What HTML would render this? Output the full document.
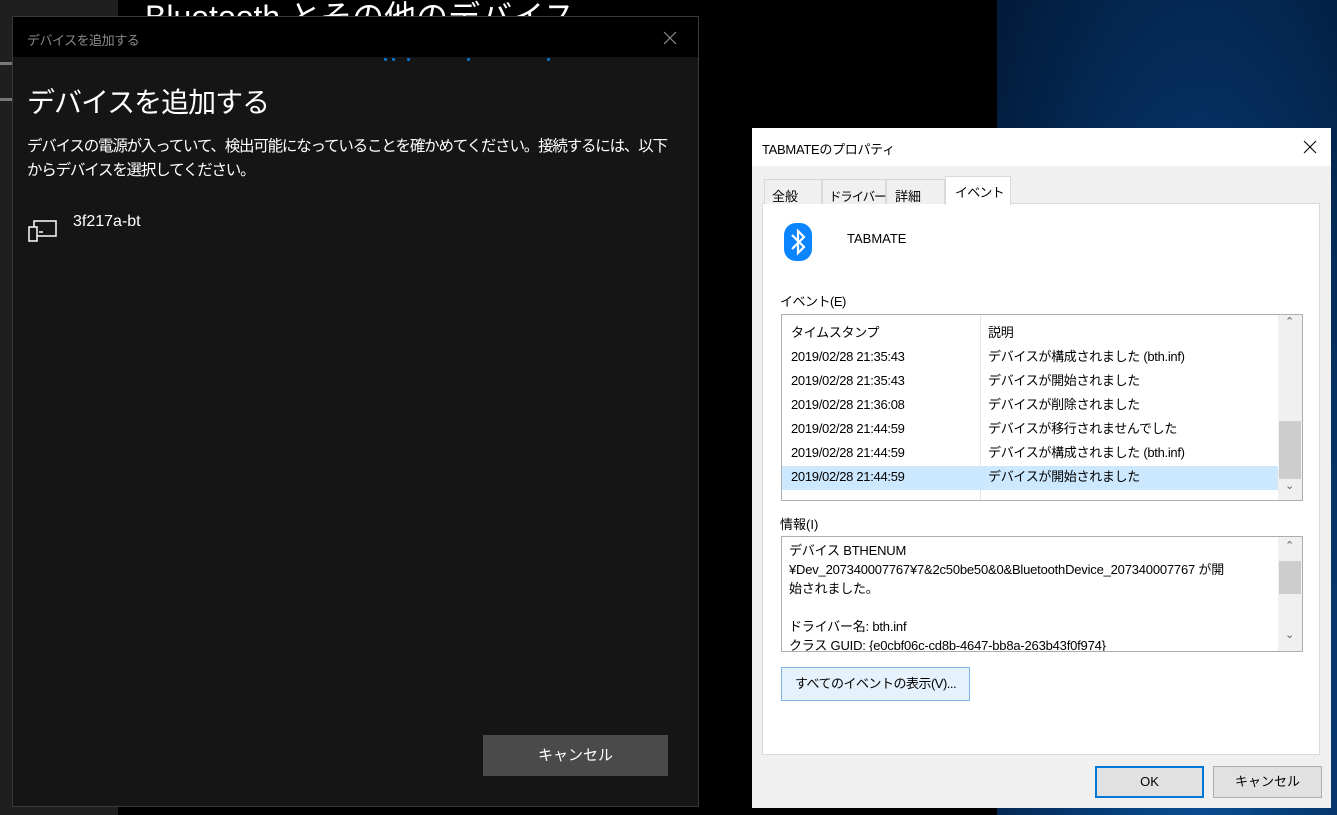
<!DOCTYPE html>
<html><head><meta charset="utf-8"><style>
*{margin:0;padding:0;box-sizing:border-box}
body{width:1337px;height:815px;overflow:hidden;background:#000;position:relative;font-family:"Liberation Sans","Noto Sans CJK JP",sans-serif}
.a{position:absolute}
.t{white-space:nowrap}
</style></head><body>
<div class="a" style="left:0;top:0;width:118px;height:815px;background:#1f1f1f"></div>
<div class="a" style="left:997px;top:0;width:340px;height:815px;background:radial-gradient(ellipse at 60% 90%,#0a4f95 0%,#063a72 40%,#04234a 80%,#031a38 100%)"></div>
<div class="a t" style="left:145px;top:-8px;font-size:32px;color:#fff">Bluetooth とその他のデバイス</div>
<div class="a" style="left:0;top:62px;width:12px;height:3px;background:#777"></div>
<div class="a" style="left:0;top:98px;width:12px;height:3px;background:#777"></div>
<!-- dark dialog -->
<div class="a" style="left:12px;top:16px;width:687px;height:791px;background:#151515;border:1px solid #3a3a3a">
 <div class="a" style="left:0;top:0;width:685px;height:40px;background:#000"></div>
 <div class="a t" style="left:14px;top:13px;font-size:13px;color:#8a8a8a;letter-spacing:-0.5px">デバイスを追加する</div>
 <svg class="a" style="left:650px;top:14px" width="14" height="14" viewBox="0 0 14 14" stroke="#8a8a8a" stroke-width="1.2"><line x1="1" y1="1" x2="13" y2="13"/><line x1="13" y1="1" x2="1" y2="13"/></svg>
 <div class="a" style="left:371px;top:41px;width:3px;height:3px;border-radius:50%;background:#0a78d7"></div>
 <div class="a" style="left:379px;top:41px;width:3px;height:3px;border-radius:50%;background:#0a78d7"></div>
 <div class="a" style="left:394px;top:41px;width:3px;height:3px;border-radius:50%;background:#0a78d7"></div>
 <div class="a" style="left:454px;top:41px;width:3px;height:3px;border-radius:50%;background:#0a78d7"></div>
 <div class="a" style="left:534px;top:41px;width:3px;height:3px;border-radius:50%;background:#0a78d7"></div>
 <div class="a t" style="left:14px;top:64px;font-size:28px;color:#fff;letter-spacing:-1px">デバイスを追加する</div>
 <div class="a t" style="left:14px;top:118px;font-size:15.5px;line-height:24px;color:#fff;letter-spacing:-1.2px">デバイスの電源が入っていて、検出可能になっていることを確かめてください。接続するには、以下<br>からデバイスを選択してください。</div>
 <svg class="a" style="left:14px;top:201px" width="32" height="26" viewBox="0 0 32 26" fill="none" stroke="#fff" stroke-width="1.5"><rect x="7" y="3" width="22" height="15"/><rect x="2" y="9" width="8" height="14" fill="#151515"/><line x1="12" y1="14" x2="16" y2="14"/></svg>
 <div class="a t" style="left:60px;top:196px;font-size:16px;color:#fff">3f217a-bt</div>
 <div class="a" style="left:470px;top:718px;width:185px;height:41px;background:#4a4a4a;color:#fff;font-size:15px;text-align:center;line-height:41px">キャンセル</div>
</div>
<!-- properties dialog -->
<div class="a" style="left:752px;top:128px;width:579px;height:680px;background:#f0f0f0;font-size:13px;color:#000">
 <div class="a" style="left:0;top:0;width:579px;height:38px;background:#fff"></div>
 <div class="a t" style="left:10px;top:11px;font-size:13px;letter-spacing:-0.3px">TABMATEのプロパティ</div>
 <svg class="a" style="left:551px;top:12px" width="14" height="14" viewBox="0 0 14 14" stroke="#000" stroke-width="1.1"><line x1="1" y1="1" x2="13" y2="13"/><line x1="13" y1="1" x2="1" y2="13"/></svg>
 <div class="a" style="left:10px;top:75px;width:558px;height:552px;background:#fff;border:1px solid #dadada"></div>
 <div class="a t" style="left:12px;top:51px;width:58px;height:25px;border:1px solid #d9d9d9;border-bottom:none;background:#f0f0f0;padding:6px 0 0 7px">全般</div>
 <div class="a t" style="left:70px;top:51px;width:64px;height:25px;border:1px solid #d9d9d9;border-bottom:none;background:#f0f0f0;padding:6px 0 0 6px;font-size:12.5px;letter-spacing:-1.2px">ドライバー</div>
 <div class="a t" style="left:134px;top:51px;width:59px;height:25px;border:1px solid #d9d9d9;border-bottom:none;background:#f0f0f0;padding:6px 0 0 8px">詳細</div>
 <div class="a t" style="left:193px;top:48px;width:66px;height:29px;border:1px solid #d9d9d9;border-bottom:none;background:#fff;padding:5px 0 0 9px;letter-spacing:-0.8px">イベント</div>
 <svg class="a" style="left:32px;top:95px" width="28" height="38" viewBox="0 0 28 38"><rect x="0" y="0" width="28" height="38" rx="12" fill="#0a84ff"/><path d="M8 12 L20 24 L14 30 L14 8 L20 14 L8 26" fill="none" stroke="#fff" stroke-width="2.2"/></svg>
 <div class="a t" style="left:95px;top:103px">TABMATE</div>
 <div class="a t" style="left:28px;top:163px;letter-spacing:-0.5px">イベント(E)</div>
 <div class="a" style="left:29px;top:186px;width:522px;height:187px;background:#fff;border:1px solid #adadad;overflow:hidden">
  <div class="a" style="left:198px;top:0;width:1px;height:185px;background:#e5e5e5"></div>
  <div class="a" style="left:0;top:151px;width:496px;height:24px;background:#cce8ff"></div>
  <div class="a" style="left:496px;top:0;width:24px;height:185px;background:#f0f0f0"></div>
  <div class="a" style="left:497px;top:106px;width:22px;height:58px;background:#cdcdcd"></div>
  <div class="a t" style="left:503px;top:0px;font-size:11px;color:#606060">⌃</div>
  <div class="a t" style="left:503px;top:164px;font-size:11px;color:#606060">⌄</div>
  <div class="a t" style="left:9px;top:6px;line-height:24px;letter-spacing:-0.3px">タイムスタンプ<br>2019/02/28 21:35:43<br>2019/02/28 21:35:43<br>2019/02/28 21:36:08<br>2019/02/28 21:44:59<br>2019/02/28 21:44:59<br>2019/02/28 21:44:59</div>
  <div class="a t" style="left:206px;top:6px;line-height:24px;letter-spacing:-0.3px">説明<br>デバイスが構成されました (bth.inf)<br>デバイスが開始されました<br>デバイスが削除されました<br>デバイスが移行されませんでした<br>デバイスが構成されました (bth.inf)<br>デバイスが開始されました</div>
 </div>
 <div class="a t" style="left:28px;top:386px">情報(I)</div>
 <div class="a" style="left:29px;top:408px;width:522px;height:116px;background:#fff;border:1px solid #adadad;overflow:hidden">
  <div class="a" style="left:496px;top:0;width:24px;height:114px;background:#f0f0f0"></div>
  <div class="a" style="left:497px;top:24px;width:22px;height:33px;background:#cdcdcd"></div>
  <div class="a t" style="left:503px;top:2px;font-size:11px;color:#606060">⌃</div>
  <div class="a t" style="left:503px;top:91px;font-size:11px;color:#606060">⌄</div>
  <div class="a t" style="left:7px;top:4px;line-height:19px;letter-spacing:-0.2px">デバイス BTHENUM<br>¥Dev_207340007767¥7&amp;2c50be50&amp;0&amp;BluetoothDevice_207340007767 が開<br>始されました。<br><br>ドライバー名: bth.inf<br>クラス GUID: {e0cbf06c-cd8b-4647-bb8a-263b43f0f974}</div>
 </div>
 <div class="a t" style="left:29px;top:539px;width:189px;height:34px;background:#e5f1fb;border:1px solid #7ab7e8;text-align:center;line-height:32px;letter-spacing:-0.5px">すべてのイベントの表示(V)...</div>
 <div class="a t" style="left:343px;top:638px;width:109px;height:32px;background:#e1e1e1;border:2px solid #0078d7;text-align:center;line-height:28px">OK</div>
 <div class="a t" style="left:461px;top:638px;width:109px;height:32px;background:#e1e1e1;border:1px solid #adadad;text-align:center;line-height:30px">キャンセル</div>
</div>
</body></html>
